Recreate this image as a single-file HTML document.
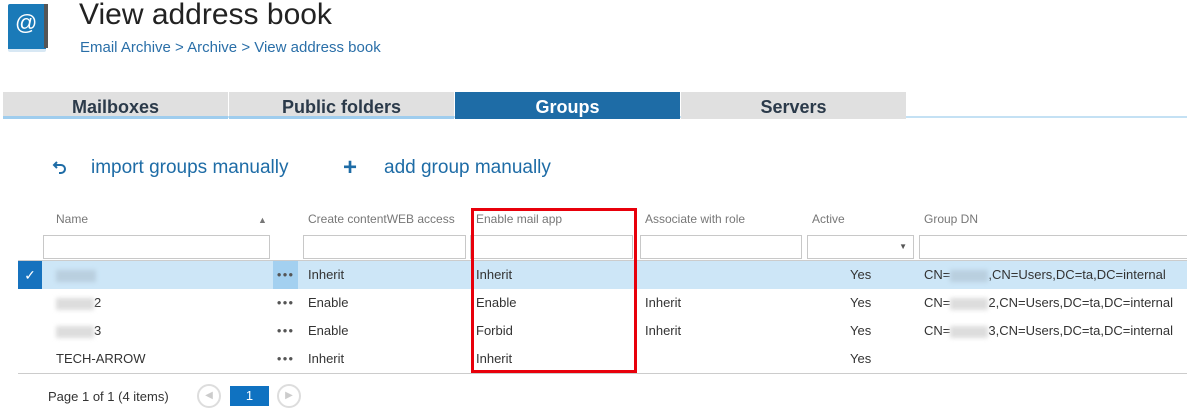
<!DOCTYPE html>
<html><head><meta charset="utf-8"><style>
*{box-sizing:border-box;margin:0;padding:0}
body{width:1187px;height:414px;background:#fff;font-family:"Liberation Sans",sans-serif;position:relative;overflow:hidden;color:#333}
.a{position:absolute;white-space:nowrap}
.tab{position:absolute;top:92px;height:27px;background:#e0e0e0;border-bottom:3px solid #9fcdee;font-size:18px;font-weight:bold;color:#2b3a4a;text-align:center;line-height:30px}
.h{position:absolute;top:212px;font-size:12px;color:#777}
.f{position:absolute;top:235px;height:24px;border:1px solid #c8c8c8;background:#fff}
.c{position:absolute;font-size:13px;color:#333}
.blur{display:inline-block;width:38px;height:12px;background:#ddd;filter:blur(2px);vertical-align:middle}
.dots{position:absolute;left:273px;width:25px;text-align:center;font-size:8px;color:#555;letter-spacing:1px}
</style></head><body>
<div class="a" style="left:8px;top:4px;width:38px;height:48px;background:#1a7ab8;border-radius:2px;border-bottom:3px solid #d8e8f4"></div>
<div class="a" style="left:44px;top:4px;width:4px;height:44px;background:#555"></div>
<div class="a" style="left:15px;top:10px;font-size:22px;color:#fff">@</div>
<div class="a" style="left:79px;top:-2px;font-size:30px;color:#222">View address book</div>
<div class="a" style="left:80px;top:39px;font-size:15px;color:#2a6fa8">Email Archive &gt; Archive &gt; View address book</div>

<div class="a" style="left:3px;top:116px;width:1184px;height:2px;background:#c4e1f4"></div>
<div class="tab" style="left:3px;width:225px">Mailboxes</div>
<div class="tab" style="left:229px;width:225px">Public folders</div>
<div class="tab" style="left:455px;width:225px;background:#1e6ca6;color:#fff;border-bottom-color:#1e6ca6">Groups</div>
<div class="tab" style="left:681px;width:225px;border-bottom:none">Servers</div>

<svg class="a" style="left:52px;top:160px" width="16" height="16" viewBox="0 0 16 16"><path d="M5 2 L2 5 L5 8 M2 5 H9 A4 4 0 0 1 9 13 H7" fill="none" stroke="#1e6ca6" stroke-width="2"/></svg>
<div class="a" style="left:91px;top:157px;font-size:19px;color:#1e6ca6">import groups manually</div>
<div class="a" style="left:343px;top:154px;font-size:24px;color:#1e6ca6;font-weight:bold">+</div>
<div class="a" style="left:384px;top:157px;font-size:19px;color:#1e6ca6">add group manually</div>

<div class="h" style="left:56px">Name</div>
<div class="h" style="left:258px;font-size:9px;top:215px">▲</div>
<div class="h" style="left:308px">Create contentWEB access</div>
<div class="h" style="left:476px">Enable mail app</div>
<div class="h" style="left:645px">Associate with role</div>
<div class="h" style="left:812px">Active</div>
<div class="h" style="left:924px">Group DN</div>
<div class="f" style="left:43px;width:227px"></div>
<div class="f" style="left:303px;width:163px"></div>
<div class="f" style="left:470px;width:163px"></div>
<div class="f" style="left:640px;width:162px"></div>
<div class="f" style="left:807px;width:107px"><span class="a" style="right:6px;top:6px;font-size:8px;color:#555">▼</span></div>
<div class="f" style="left:919px;width:280px"></div>
<div class="a" style="left:18px;top:260px;width:1169px;height:1px;background:#ccc"></div>

<div class="a" style="left:42px;top:261px;width:1145px;height:28px;background:#cde6f7"></div>
<div class="a" style="left:18px;top:261px;width:24px;height:28px;background:#1672be;color:#fff;font-size:14px;text-align:center;line-height:28px">✓</div>
<div class="a" style="left:273px;top:261px;width:25px;height:28px;background:#a3d0f0"></div>
<div class="a" style="left:18px;top:373px;width:1169px;height:1px;background:#ccc"></div>

<div class="c" style="left:56px;top:267px"><span class="blur" style="background:#b9cfdf;width:40px"></span></div>
<div class="c" style="left:56px;top:295px"><span class="blur"></span>2</div>
<div class="c" style="left:56px;top:323px"><span class="blur"></span>3</div>
<div class="c" style="left:56px;top:351px">TECH-ARROW</div>
<div class="dots" style="top:270px">●●●</div>
<div class="dots" style="top:298px">●●●</div>
<div class="dots" style="top:326px">●●●</div>
<div class="dots" style="top:354px">●●●</div>
<div class="c" style="left:308px;top:267px">Inherit</div>
<div class="c" style="left:308px;top:295px">Enable</div>
<div class="c" style="left:308px;top:323px">Enable</div>
<div class="c" style="left:308px;top:351px">Inherit</div>
<div class="c" style="left:476px;top:267px">Inherit</div>
<div class="c" style="left:476px;top:295px">Enable</div>
<div class="c" style="left:476px;top:323px">Forbid</div>
<div class="c" style="left:476px;top:351px">Inherit</div>
<div class="c" style="left:645px;top:295px">Inherit</div>
<div class="c" style="left:645px;top:323px">Inherit</div>
<div class="c" style="left:850px;top:267px">Yes</div>
<div class="c" style="left:850px;top:295px">Yes</div>
<div class="c" style="left:850px;top:323px">Yes</div>
<div class="c" style="left:850px;top:351px">Yes</div>
<div class="c" style="left:924px;top:267px">CN=<span class="blur" style="background:#b9cfdf"></span>,CN=Users,DC=ta,DC=internal</div>
<div class="c" style="left:924px;top:295px">CN=<span class="blur"></span>2,CN=Users,DC=ta,DC=internal</div>
<div class="c" style="left:924px;top:323px">CN=<span class="blur"></span>3,CN=Users,DC=ta,DC=internal</div>

<div class="a" style="left:471px;top:208px;width:166px;height:165px;border:3px solid #e8000b"></div>

<div class="c" style="left:48px;top:389px">Page 1 of 1 (4 items)</div>
<div class="a" style="left:197px;top:384px;width:24px;height:24px;border:2px solid #ddd;border-radius:50%;color:#ccc;font-size:10px;text-align:center;line-height:20px">◀</div>
<div class="a" style="left:230px;top:386px;width:39px;height:20px;background:#0f72c1;color:#fff;font-size:13px;text-align:center;line-height:20px">1</div>
<div class="a" style="left:277px;top:384px;width:24px;height:24px;border:2px solid #ddd;border-radius:50%;color:#ccc;font-size:10px;text-align:center;line-height:20px">▶</div>
</body></html>
